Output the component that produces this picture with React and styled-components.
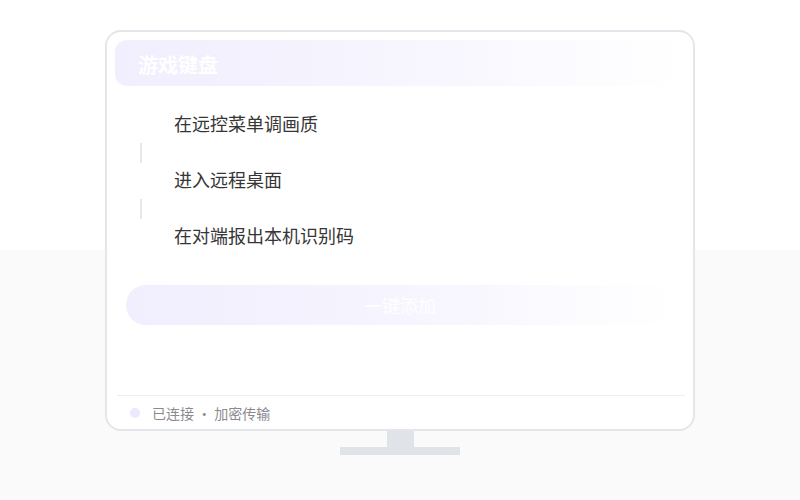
import React from "react";
import styled, { createGlobalStyle } from "styled-components";

const Global = createGlobalStyle`
  html, body { margin: 0; padding: 0; }
  body {
    width: 800px;
    height: 500px;
    background: linear-gradient(to bottom, #ffffff 0, #ffffff 250px, #fafafa 250px, #fafafa 100%);
    font-family: "Noto Sans CJK SC", "Noto Sans", sans-serif;
  }
`

const Page = styled.div`
  display: flex;
  flex-direction: column;
  align-items: center;
  padding-top: 30px;
`

const Monitor = styled.div`
  box-sizing: border-box;
  width: 590px;
  height: 401px;
  border: 2px solid #e3e6eb;
  border-radius: 16px;
  background: #fff;
  padding: 8px 8px 0;
  display: flex;
  flex-direction: column;
`

const Header = styled.div`
  height: 46px;
  border-radius: 12px;
  background: linear-gradient(to right, #f1eefe 0%, #f7f5fe 50%, #ffffff 100%);
  display: flex;
  align-items: center;
  padding: 2px 0 0 23px;
  box-sizing: border-box;
  color: #fff;
  font-size: 20px;
  font-weight: 700;
`

const Steps = styled.div`
  display: flex;
  flex-direction: column;
  padding: 21px 0 0 16px;
`

const Step = styled.div`
  box-sizing: border-box;
  display: flex;
  align-items: center;
  height: 36px;
  padding-bottom: 4px;
  gap: 23px;
  font-size: 18px;
  color: #363636;
`

const Marker = styled.div`
  width: 20px;
  height: 20px;
  border-radius: 50%;
  background: #fff;
`

const Connector = styled.div`
  width: 2px;
  height: 20px;
  margin-left: 9px;
  background: #e6e8ec;
`

const AddButton = styled.div`
  margin: 30px 11px 0;
  height: 40px;
  border-radius: 20px;
  background: linear-gradient(to right, #f1eefe 0%, #f7f5fe 55%, #ffffff 100%);
  display: flex;
  align-items: center;
  justify-content: center;
  color: #fff;
  font-size: 18px;
`

const Footer = styled.div`
  margin-top: auto;
  margin-left: 2px;
  height: 33px;
  border-top: 1px solid #eceef2;
  display: flex;
  align-items: center;
  gap: 12px;
  padding-left: 13px;
  font-size: 14px;
  color: #8a8a8f;
`

const Dot = styled.span`
  width: 10px;
  height: 10px;
  border-radius: 50%;
  background: #ece8fd;
`

const Neck = styled.div`
  width: 27px;
  height: 16px;
  background: #e0e3e8;
`

const Base = styled.div`
  width: 120px;
  height: 8px;
  background: #e0e3e8;
`

const steps = ["在远控菜单调画质", "进入远程桌面", "在对端报出本机识别码"];

export default function App() {
  return (
    <Page>
      <Global />
      <Monitor>
        <Header>游戏键盘</Header>
        <Steps>
          {steps.map((s, i) => (
            <React.Fragment key={i}>
              {i > 0 && <Connector />}
              <Step>
                <Marker />
                {s}
              </Step>
            </React.Fragment>
          ))}
        </Steps>
        <AddButton>一键添加</AddButton>
        <Footer>
          <Dot />
          已连接 · 加密传输
        </Footer>
      </Monitor>
      <Neck />
      <Base />
    </Page>
  );
}
